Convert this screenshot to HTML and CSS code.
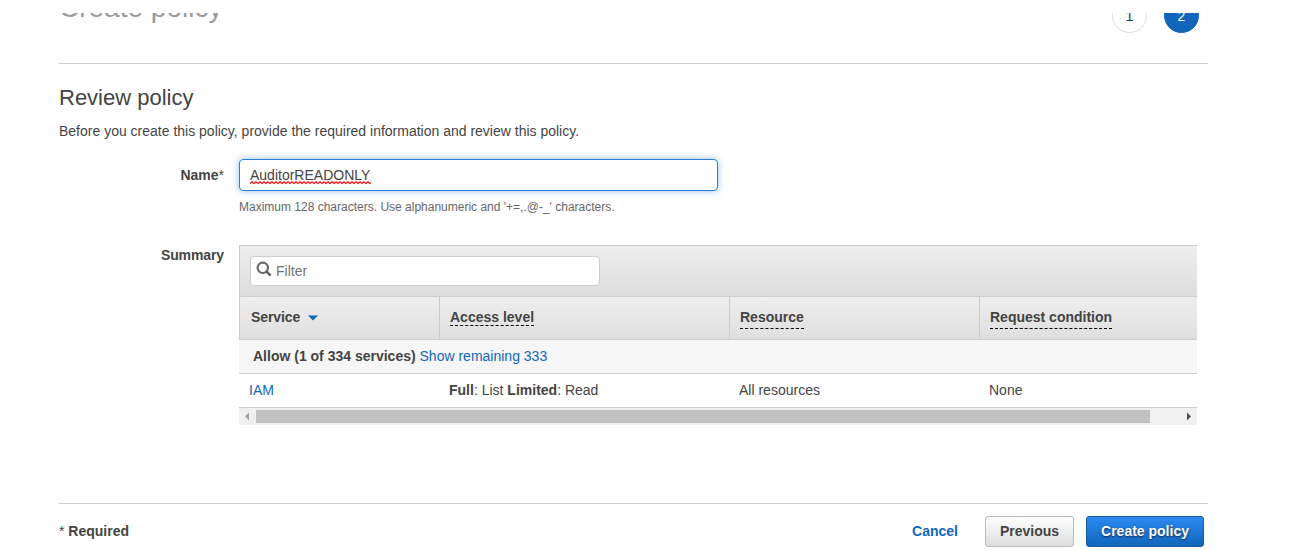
FILE: index.html
```html
<!DOCTYPE html>
<html lang="en">
<head>
<meta charset="utf-8">
<title>Create policy</title>
<link rel="stylesheet" href="styles.css">
</head>
<body>
<div class="page">
  <header class="wizard-header">
    <h1 class="wizard-title">Create policy</h1>
    <div class="steps">
      <span class="step">1</span>
      <span class="step step-active">2</span>
    </div>
  </header>
  <main class="content">
    <h2 class="heading">Review policy</h2>
    <p class="intro">Before you create this policy, provide the required information and review this policy.</p>
    <div class="form-row name-row">
      <div class="label">Name<span class="star">*</span></div>
      <div class="field">
        <div class="name-input"><span class="name-value">AuditorREADONLY<svg class="squiggle" width="121" height="4" viewBox="0 0 121 4"><defs><pattern id="wave" width="4" height="4" patternUnits="userSpaceOnUse"><path d="M-1 1.5L0 2.5L2 .8L4 2.5L5 1.5" fill="none" stroke="#f00" stroke-width="1.1"/></pattern></defs><rect width="121" height="4" fill="url(#wave)"/></svg></span></div>
        <div class="hint">Maximum 128 characters. Use alphanumeric and '+=,.@-_' characters.</div>
      </div>
    </div>
    <div class="form-row">
      <div class="label summary-label">Summary</div>
      <div class="table">
        <div class="toolbar">
          <div class="filter">
            <svg class="search" width="16" height="16" viewBox="0 0 16 16" fill="none" stroke="#666"><circle cx="6.8" cy="6.8" r="5.2" stroke-width="2.1"/><path d="M10.5 10.5L14.6 14.6" stroke-width="2.5"/></svg>
            <span>Filter</span>
          </div>
        </div>
        <div class="grid thead">
          <div class="th">Service<svg class="sort" width="10" height="6" viewBox="0 0 10 6"><path d="M0 .5H10L5 5.5Z" fill="#1166bb"/></svg></div>
          <div class="th"><span class="term term-tight">Access level</span></div>
          <div class="th"><span class="term">Resource</span></div>
          <div class="th"><span class="term">Request condition</span></div>
        </div>
        <div class="group"><b>Allow (1 of 334 services)</b> <a class="link">Show remaining 333</a></div>
        <div class="grid row">
          <div class="td"><a class="link">IAM</a></div>
          <div class="td"><b>Full</b>: List <b>Limited</b>: Read</div>
          <div class="td">All resources</div>
          <div class="td">None</div>
        </div>
        <div class="scrollbar">
          <svg width="17" height="17" viewBox="0 0 17 17"><path d="M10 4.5V12.5L6 8.5Z" fill="#a3a3a3"/></svg>
          <div class="thumb"></div>
          <svg class="arrow-right" width="17" height="17" viewBox="0 0 17 17"><path d="M7 4.5V12.5L11 8.5Z" fill="#505050"/></svg>
        </div>
      </div>
    </div>
  </main>
  <footer class="footer">
    <div class="required"><span class="star">*</span> Required</div>
    <div class="actions">
      <a class="cancel">Cancel</a>
      <button class="button">Previous</button>
      <button class="button primary">Create policy</button>
    </div>
  </footer>
</div>
</body>
</html>
```
FILE: styles.css
```css
* { box-sizing: border-box; }
body {
  margin: 0;
  height: 550px;
  overflow: hidden;
  background: #fff;
  color: #444;
  font: 14px/20px "Liberation Sans", Arial, sans-serif;
}
.page { width: 1149px; margin-left: 59px; padding-top: 13px; }
.wizard-header {
  display: flex;
  justify-content: space-between;
  align-items: flex-start;
  height: 51px;
  overflow: hidden;
  border-bottom: 1px solid #ccc;
}
.wizard-title { margin: -23px 0 0; font-size: 28px; line-height: 36px; font-weight: 400; color: #999; }
.steps { display: flex; gap: 17px; margin: -15px 9px 0 0; }
.step {
  width: 35px;
  height: 35px;
  border: 1px solid #ddd;
  border-radius: 50%;
  text-align: center;
  line-height: 35px;
  color: #146;
}
.step-active { background: #16b; border-color: #16b; color: #fff; }
.content { height: 439px; padding-top: 19px; }
.heading { margin: 0; font-size: 22px; line-height: 30px; font-weight: 400; }
.intro { margin: 8px 0 18px; }
.form-row { display: flex; gap: 15px; }
.name-row { height: 86px; }
.label { width: 165px; text-align: right; font-weight: 700; }
.summary-label { letter-spacing: -0.1px; }
.name-row .label { padding-top: 6px; }
.star { font-weight: 400; }
.name-input {
  width: 479px;
  height: 32px;
  padding: 5px 10px;
  border: 1px solid #2a7fd8;
  border-radius: 4px;
  box-shadow: 0 0 7px rgba(42, 127, 216, .5);
}
.name-value { position: relative; }
.squiggle { position: absolute; left: 0; bottom: -2px; }
.hint { margin-top: 6px; font-size: 12px; color: #666; }
.table { width: 958px; }
.toolbar {
  height: 51px;
  padding: 10px;
  border: solid #ccc;
  border-width: 1px 0 0 1px;
  background: linear-gradient(#eee, #ddd);
}
.filter {
  display: flex;
  width: 350px;
  height: 30px;
  padding: 4px 5px;
  gap: 4px;
  border: 1px solid #ccc;
  border-radius: 4px;
  background: #fff;
  color: #757575;
}
.grid { display: grid; grid-template-columns: 200px 290px 250px 218px; }
.thead {
  height: 44px;
  border: solid #ccc;
  border-width: 1px 0;
  background: linear-gradient(#eee, #dfdfdf);
  font-weight: 700;
}
.th { padding: 10px 0 0 10px; border-left: 1px solid #ccc; }
.th:first-child { padding-left: 11px; letter-spacing: -0.1px; }
.sort { margin: 0 0 1px 8px; }
.term { display: inline-block; height: 22px; border-bottom: 1px dashed #000; }
.term-tight { height: 19px; }
.group { height: 34px; padding: 6px 14px; background: #f6f6f6; border-bottom: 1px solid #ccc; }
.row { height: 34px; border-bottom: 1px solid #ccc; }
.td { padding: 6px 10px; }
.link { color: #16b; }
.scrollbar { display: flex; height: 17px; background: #f0f0f0; }
.thumb { width: 894px; height: 13px; margin-top: 2px; background: #c1c1c1; }
.arrow-right { margin-left: auto; }
.footer {
  display: flex;
  justify-content: space-between;
  align-items: flex-start;
  padding: 12px 4px 0 0;
  border-top: 1px solid #ccc;
  font-weight: 700;
}
.required { padding-top: 5px; }
.actions { display: flex; align-items: flex-start; }
.cancel { margin-right: 27px; padding-top: 5px; color: #16b; }
.button {
  width: 89px;
  height: 31px;
  margin-right: 12px;
  padding: 0 0 2px;
  border: 1px solid #bbb;
  border-radius: 3px;
  background: linear-gradient(#fff, #ddd);
  color: #444;
  font: 700 14px/20px "Liberation Sans", Arial, sans-serif;
}
.primary {
  width: 118px;
  margin-right: 0;
  border-color: #15599f;
  background: linear-gradient(#2b8af0, #16b);
  color: #fff;
  text-shadow: 0 1px 2px #124;
}
```
